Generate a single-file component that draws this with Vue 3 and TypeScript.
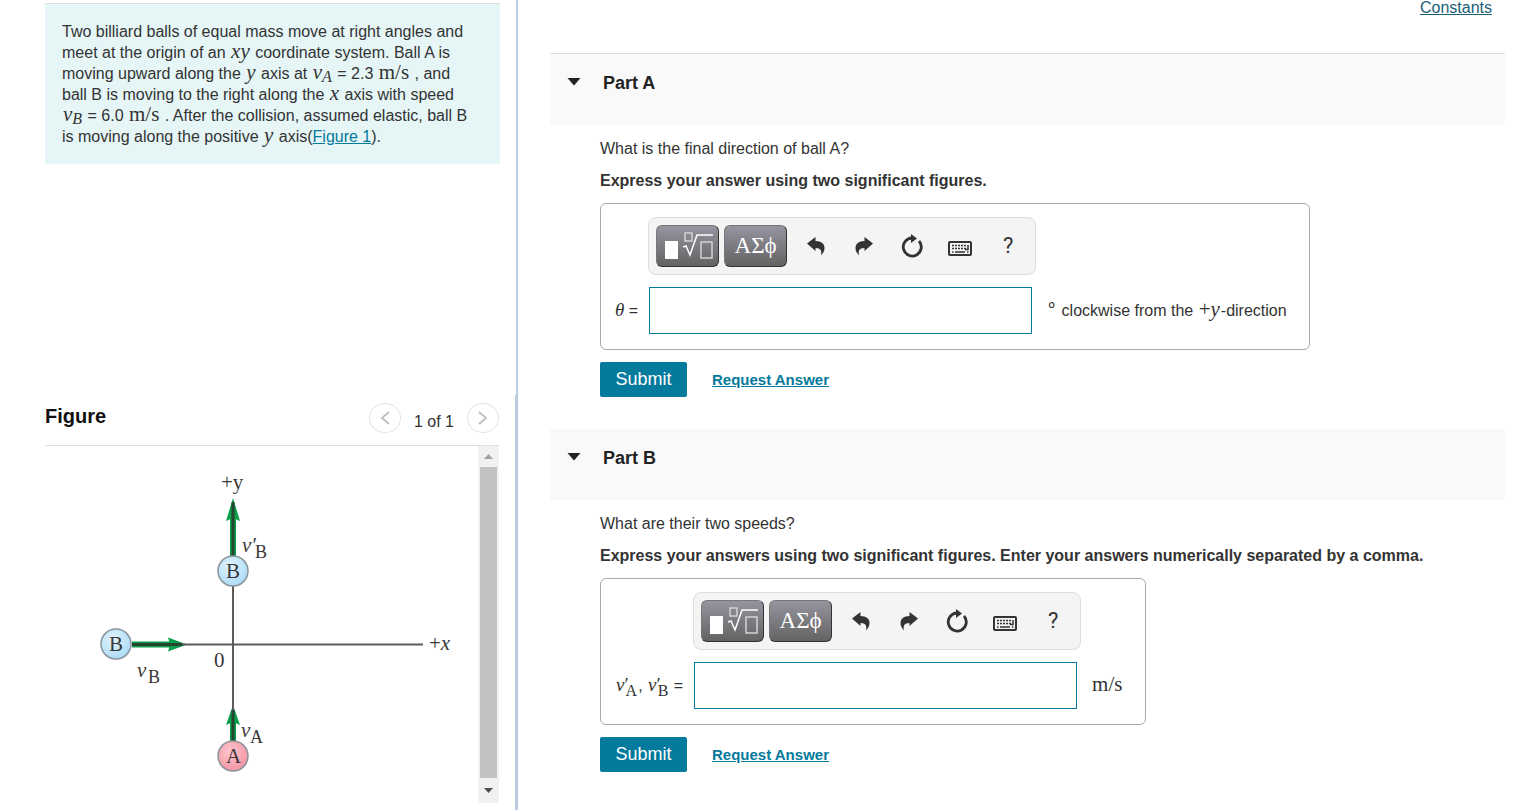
<script setup lang="ts">
import { ref } from 'vue'

interface Part {
  id: string
  title: string
  question: string
  instruction: string
}

const parts: Part[] = [
  {
    id: 'a',
    title: 'Part A',
    question: 'What is the final direction of ball A?',
    instruction: 'Express your answer using two significant figures.',
  },
  {
    id: 'b',
    title: 'Part B',
    question: 'What are their two speeds?',
    instruction:
      'Express your answers using two significant figures. Enter your answers numerically separated by a comma.',
  },
]

const answers = ref<Record<string, string>>({ a: '', b: '' })
</script>

<template>
  <div class="page">
    <aside class="left">
      <section class="prompt">
        Two billiard balls of equal mass move at right angles and<br />
        meet at the origin of an <i class="m">xy</i> coordinate system. Ball A is<br />
        moving upward along the <i class="m">y</i> axis at <i class="m">v<sub>A</sub></i> = 2.3
        <span class="m">m/s</span> , and<br />
        ball B is moving to the right along the <i class="m">x</i> axis with speed<br />
        <i class="m">v<sub>B</sub></i> = 6.0 <span class="m">m/s</span> . After the collision, assumed elastic, ball B<br />
        is moving along the positive <i class="m">y</i> axis(<a href="#figure">Figure 1</a>).
      </section>

      <section id="figure" class="figure">
        <header class="figure-head">
          <h2>Figure</h2>
          <nav class="pager">
            <button type="button" aria-label="Previous figure">
              <svg width="12" height="16" viewBox="0 0 12 16"><path d="M10 2 3 8l7 6" /></svg>
            </button>
            <span>1 of 1</span>
            <button type="button" aria-label="Next figure">
              <svg width="12" height="16" viewBox="0 0 12 16"><path d="M2 2l7 6-7 6" /></svg>
            </button>
          </nav>
        </header>
        <div class="figure-body">
          <svg class="diagram" width="433" height="357" viewBox="45 446 433 357" role="img" aria-label="Collision diagram">
            <defs>
              <radialGradient id="blue" cx="0.4" cy="0.35" r="0.7">
                <stop offset="0" stop-color="#e2f4fd" />
                <stop offset="1" stop-color="#a9daf5" />
              </radialGradient>
              <radialGradient id="pink" cx="0.4" cy="0.35" r="0.7">
                <stop offset="0" stop-color="#fcc5cc" />
                <stop offset="1" stop-color="#f493a2" />
              </radialGradient>
            </defs>
            <g stroke="#0a9f4c" stroke-width="6">
              <path d="M233 557V517M132 644.500H170M233 742V722" />
            </g>
            <g fill="#0a9f4c">
              <path d="M233 498l7 23-7-3-7 3z" />
              <path d="M187 644.500l-19-7 2 7-2 7z" />
              <path d="M233 705l7 20-7-3-7 3z" />
            </g>
            <g stroke="#5c5a5a" stroke-width="2">
              <path d="M233 580V745M180 644.500H423" />
            </g>
            <g stroke="#27452f" stroke-width="3">
              <path d="M233 502V557M132 644.500H182M233 710V742" />
            </g>
            <g stroke="#8b939b" stroke-width="1.500">
              <circle cx="233" cy="571" r="15" fill="url(#blue)" />
              <circle cx="116" cy="644" r="15" fill="url(#blue)" />
              <circle cx="233" cy="756" r="15" fill="url(#pink)" />
            </g>
            <g class="label">
              <text x="221" y="489">+y</text>
              <text x="429" y="650">+<tspan font-style="italic">x</tspan></text>
              <text x="214" y="667">0</text>
              <text x="226" y="578">B</text>
              <text x="109" y="651">B</text>
              <text x="226" y="763">A</text>
              <text x="242" y="552" font-style="italic">v′</text>
              <text x="255" y="558" class="small">B</text>
              <text x="137" y="677" font-style="italic">v</text>
              <text x="148" y="683" class="small">B</text>
              <text x="241" y="737" font-style="italic">v</text>
              <text x="250" y="743" class="small">A</text>
            </g>
          </svg>
          <div class="scrollbar">
            <button type="button" aria-label="Scroll up">
              <svg width="9" height="5" viewBox="0 0 9 5"><path d="M0 5 4.500 0 9 5z" fill="#a0a0a0" /></svg>
            </button>
            <div class="thumb"></div>
            <button type="button" class="down" aria-label="Scroll down">
              <svg width="9" height="5" viewBox="0 0 9 5"><path d="M0 0h9L4.500 5z" fill="#505050" /></svg>
            </button>
          </div>
        </div>
      </section>
    </aside>

    <main class="right">
      <div class="top-links"><a href="#constants">Constants</a></div>
      <section v-for="part in parts" :key="part.id" class="part">
        <header class="part-head">
          <svg width="14" height="8" viewBox="0 0 14 8"><path d="M0.500 0h13L7 7.500z" fill="#222" /></svg>
          <h2>{{ part.title }}</h2>
        </header>
        <form class="part-body" @submit.prevent>
          <div class="text">
            <p>{{ part.question }}</p>
            <p class="instruction">{{ part.instruction }}</p>
          </div>
          <div class="answer">
            <div class="toolbar" role="toolbar" aria-label="Math tools">
              <button type="button" class="dark templates" aria-label="Templates">
                <svg width="57" height="30" viewBox="659 231 57 30" fill="none">
                  <path d="M665 241h13v18h-13z" fill="#fff" />
                  <path d="M685 233h7v8h-7zM701 242h11v16h-11z" stroke="#d2d2d4" stroke-width="1.500" />
                  <path d="M683 247l3-1 4 9 7-20h16" stroke="#fff" stroke-width="1.500" />
                </svg>
              </button>
              <button type="button" class="dark greek">ΑΣϕ</button>
              <div class="tools">
                <button type="button" aria-label="Undo">
                  <svg width="20" height="20" viewBox="0 0 20 20"><path d="M1 7.500 9.500 1v4c6 0 9 3 9 7 0 3-1 4.500-3.500 7.500 1-4.500 0-7.500-5.500-7.500v3z" fill="#333" /></svg>
                </button>
                <button type="button" aria-label="Redo">
                  <svg width="20" height="20" viewBox="0 0 20 20"><path d="M19 7.500 10.500 1v4c-6 0-9 3-9 7 0 3 1 4.500 3.500 7.500-1-4.500 0-7.500 5.500-7.500v3z" fill="#333" /></svg>
                </button>
                <button type="button" aria-label="Reset">
                  <svg width="24" height="24" viewBox="0 0 24 24">
                    <path d="M19 7A9 9 0 1 1 12 4" fill="none" stroke="#333" stroke-width="2.800" />
                    <path d="M11 0l6 4.500-6 4.500z" fill="#333" />
                  </svg>
                </button>
                <button type="button" aria-label="Keyboard shortcuts">
                  <svg class="keys" width="24" height="16" viewBox="0 0 24 16" fill="none" stroke="#333">
                    <rect x="1" y="1" width="22" height="13" rx="1" stroke-width="2" />
                    <path d="M4 4.500h14M4 7.500h14" stroke-width="1.500" stroke-dasharray="2 1" />
                    <path d="M20 4v4.500h-3M4 11h1.500M7 11h10M19 11h1.500" stroke-width="1.500" />
                  </svg>
                </button>
                <button type="button" class="help" aria-label="Help">?</button>
              </div>
            </div>
            <label :for="'answer-' + part.id">
              <template v-if="part.id === 'a'"><i class="theta">θ</i> =</template>
              <template v-else>
                <span class="m"><i>v</i>′<sub class="under">A</sub></span>,
                <span class="m"><i>v</i>′<sub class="under">B</sub></span> =
              </template>
            </label>
            <input :id="'answer-' + part.id" v-model="answers[part.id]" type="text" />
            <div class="unit">
              <template v-if="part.id === 'a'"><sup>∘</sup> clockwise from the <span class="m">+<i>y</i></span>-direction</template>
              <span v-else class="m">m/s</span>
            </div>
          </div>
          <div class="actions">
            <button type="submit">Submit</button>
            <a href="#request">Request Answer</a>
          </div>
        </form>
      </section>
    </main>
  </div>
</template>

<style>
body {
  margin: 0;
  background: #fff;
}
</style>

<style scoped>
.page {
  display: flex;
  min-height: 100vh;
  font: 16px/21px 'Liberation Sans', Arial, sans-serif;
  color: #333;
}
.page * {
  box-sizing: border-box;
}
a {
  color: #047a9c;
}
button {
  padding: 0;
  border: 0;
  background: none;
  font: inherit;
  color: inherit;
}
h2,
p {
  margin: 0;
}
.m {
  margin: 0 1px;
  font-family: 'Liberation Serif', serif;
  font-size: 21px;
  line-height: 1px;
}
sub {
  font-size: 16px;
  line-height: 1px;
  vertical-align: -3px;
}
.left {
  flex: 0 0 518px;
  display: flex;
  flex-direction: column;
  justify-content: space-between;
  padding-top: 3px;
  border-right: 2px solid #bacce0;
}
.prompt {
  margin: 0 16px 0 45px;
  padding: 17px 0 17px 17px;
  border-top: 1px solid #d3dfe0;
  background: #e6f6f7;
  white-space: nowrap;
}
.figure {
  padding: 8px 16px 7px 45px;
  border-right: 1px solid #bacce0;
}
.figure-head {
  display: flex;
  align-items: flex-start;
  justify-content: space-between;
  height: 43px;
  border-bottom: 1px solid #ddd;
}
.figure-head h2 {
  font-size: 20px;
  line-height: 26px;
  color: #111;
}
.pager {
  display: flex;
  align-items: center;
  gap: 13px;
}
.pager span {
  padding-top: 6px;
}
.pager button {
  display: grid;
  place-items: center;
  width: 32px;
  height: 30px;
  border: 1px solid #e3e3e3;
  border-radius: 50%;
}
.pager path {
  fill: none;
  stroke: #c0c0c0;
  stroke-width: 2;
}
.figure-body {
  display: flex;
}
.diagram {
  flex: 1;
  min-width: 0;
}
.label {
  font-family: 'Liberation Serif', serif;
  font-size: 21px;
  fill: #3a3738;
}
.small {
  font-size: 18px;
}
.scrollbar {
  display: flex;
  flex-direction: column;
  width: 21px;
  padding: 0 2px;
  background: #f1f1f1;
}
.scrollbar button {
  display: grid;
  place-items: center;
  height: 21px;
}
.scrollbar .down {
  height: 25px;
}
.thumb {
  flex: 1;
  background: #c1c1c1;
}
.right {
  flex: 1;
  min-width: 0;
  padding: 0 26px 0 32px;
}
.top-links {
  height: 53px;
  padding-right: 13px;
  text-align: right;
  line-height: 15px;
}
.top-links a {
  color: #1a6078;
}
.part:nth-child(2) .part-head {
  border-top: 1px solid #ddd;
  height: 72px;
}
.part-head {
  display: flex;
  align-items: flex-start;
  gap: 22px;
  height: 71px;
  padding: 18px 17px;
  background: #f9f9f9;
}
.part-head svg {
  margin-top: 6px;
}
.part-head h2 {
  font-size: 18px;
  line-height: 22px;
  color: #222;
}
.part-body {
  display: flex;
  flex-direction: column;
  align-items: flex-start;
  padding: 13px 0 32px 50px;
}
.text {
  display: flex;
  flex-direction: column;
  gap: 10px;
}
.part-body p {
  line-height: 22px;
}
.instruction {
  font-weight: bold;
}
.answer {
  display: grid;
  grid-template-columns: auto 388px auto;
  column-gap: 10px;
  row-gap: 12px;
  align-items: center;
  margin: 11px 0 12px;
  padding: 13px 22px 15px 14px;
  border: 1px solid #aaa;
  border-radius: 6px;
}
.toolbar {
  grid-column: 2;
  display: flex;
  gap: 5px;
  height: 58px;
  padding: 7px 0 7px 7px;
  border: 1px solid #ddd;
  border-radius: 8px;
  background: #f4f4f4;
}
.toolbar button {
  flex: none;
  display: grid;
  place-items: center;
}
.toolbar .dark {
  width: 63px;
  height: 42px;
  border: 1px solid #333;
  border-top-color: #777;
  border-left-color: #777;
  border-radius: 6px;
  background: linear-gradient(#96949f, #636363);
  color: #fff;
}
.toolbar .greek {
  font: 23px/24px 'Liberation Serif', serif;
}
.tools {
  display: flex;
}
.tools button {
  width: 48px;
  height: 42px;
}
.keys {
  margin-top: 5px;
}
.toolbar .help {
  font: 22px/24px Roboto, sans-serif;
}
.answer label {
  grid-column: 1;
  white-space: nowrap;
}
.theta,
.answer label .m {
  font-family: 'Liberation Serif', serif;
  font-size: 19px;
  line-height: 1px;
}
.under {
  margin-left: -3px;
  vertical-align: -5px;
}
.answer input {
  width: 383px;
  height: 47px;
  margin: 0 0 0 1px;
  padding: 0 10px;
  border: 1px solid #047a9c;
  border-radius: 0;
  background: #fff;
  font: inherit;
  outline: none;
}
.unit {
  white-space: nowrap;
}
.unit sup {
  font-size: 18px;
  line-height: 1px;
}
.actions {
  display: flex;
  align-items: center;
  gap: 25px;
}
.actions button {
  width: 87px;
  height: 35px;
  border-radius: 2px;
  background: #047a9c;
  color: #fff;
  font-size: 18px;
}
.actions a {
  font-size: 15px;
  font-weight: bold;
}
</style>
